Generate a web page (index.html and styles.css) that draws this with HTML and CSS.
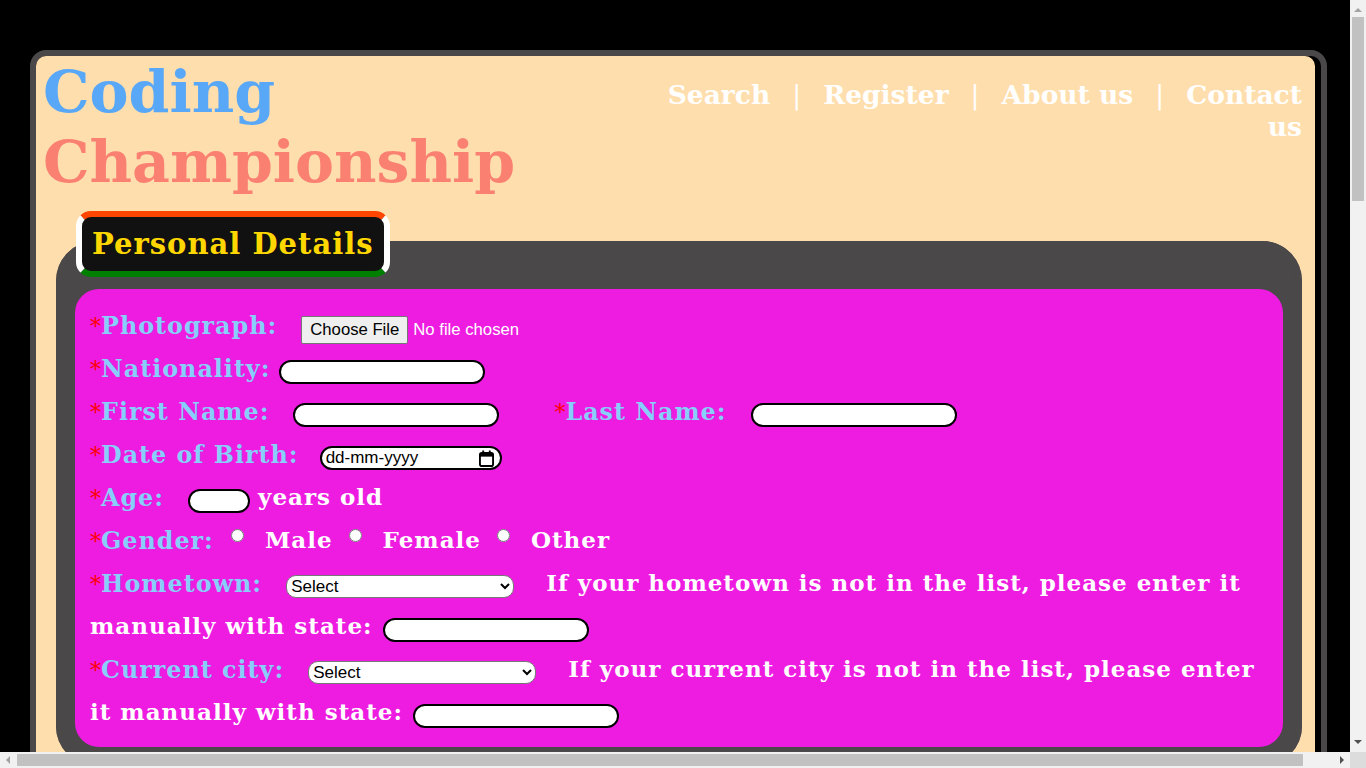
FILE: index.html
```html
<!DOCTYPE html>
<html lang="en">
<head>
<meta charset="utf-8">
<title>Coding Championship – Registration</title>
<link rel="stylesheet" href="styles.css">
</head>
<body>
<div class="frame">
  <div class="page">
    <header class="top">
      <h1 class="brand"><span class="brand-a">Coding</span><span class="brand-b">Championship</span></h1>
      <nav class="nav"><a href="#">Search</a><span class="sep">|</span><a href="#">Register</a><span class="sep">|</span><a href="#">About us</a><span class="sep">|</span><a href="#">Contact us</a></nav>
    </header>

    <form class="reg">
      <fieldset class="group">
        <legend class="legend">Personal Details</legend>
        <div class="panel">
          <div class="row"><label class="lbl"><span class="req">*</span>Photograph:</label><input class="file" type="file"></div>
          <div class="row"><label class="lbl lbl-tight"><span class="req">*</span>Nationality:</label><input class="txt" type="text"></div>
          <div class="row"><label class="lbl"><span class="req">*</span>First Name:</label><input class="txt" type="text"><label class="lbl lbl-next"><span class="req">*</span>Last Name:</label><input class="txt" type="text"></div>
          <div class="row"><label class="lbl lbl-dob"><span class="req">*</span>Date of Birth:</label><span class="date"><input class="date-in" type="text" placeholder="dd-mm-yyyy"><svg class="cal" viewBox="0 0 16 18" width="15" height="17" aria-hidden="true"><rect x="1" y="3" width="14" height="14" rx="2" fill="none" stroke="#000" stroke-width="2"/><rect x="1" y="3" width="14" height="4" fill="#000"/><rect x="3.5" y="0.5" width="2" height="4" fill="#000"/><rect x="10.5" y="0.5" width="2" height="4" fill="#000"/></svg></span></div>
          <div class="row"><label class="lbl"><span class="req">*</span>Age:</label><input class="txt txt-age" type="text"><span class="after">years old</span></div>
          <div class="row"><label class="lbl lbl-gender"><span class="req">*</span>Gender:</label><input class="radio" type="radio" name="g"><span class="opt">Male</span><input class="radio" type="radio" name="g"><span class="opt">Female</span><input class="radio" type="radio" name="g"><span class="opt">Other</span></div>
          <div class="row"><label class="lbl"><span class="req">*</span>Hometown:</label><select class="sel"><option>Select</option></select><span class="note">If your hometown is not in the list, please enter it manually with state:</span><input class="txt txt-after" type="text"></div>
          <div class="row"><label class="lbl"><span class="req">*</span>Current city:</label><select class="sel"><option>Select</option></select><span class="note">If your current city is not in the list, please enter it manually with state:</span><input class="txt txt-after" type="text"></div>
        </div>
      </fieldset>

      <fieldset class="group">
        <legend class="legend">Contact Details</legend>
        <div class="panel">
          <div class="row"><label class="lbl"><span class="req">*</span>Email ID:</label><input class="txt" type="text"></div>
          <div class="row"><label class="lbl"><span class="req">*</span>Confirm Email ID:</label><input class="txt" type="text"></div>
          <div class="row"><label class="lbl"><span class="req">*</span>Mobile No.:</label><span class="after">+91</span><input class="txt txt-after" type="text"></div>
          <div class="row"><label class="lbl">Alternate Mobile No.:</label><span class="after">+91</span><input class="txt txt-after" type="text"></div>
          <div class="row"><label class="lbl"><span class="req">*</span>Address:</label><textarea class="area" rows="3"></textarea></div>
          <div class="row"><label class="lbl"><span class="req">*</span>State:</label><select class="sel"><option>Select</option></select></div>
          <div class="row"><label class="lbl"><span class="req">*</span>Pin Code:</label><input class="txt" type="text"></div>
        </div>
      </fieldset>

      <fieldset class="group">
        <legend class="legend">Educational Details</legend>
        <div class="panel">
          <div class="row"><label class="lbl"><span class="req">*</span>Institution Name:</label><input class="txt" type="text"></div>
          <div class="row"><label class="lbl"><span class="req">*</span>Course:</label><select class="sel"><option>Select</option></select><label class="lbl lbl-next"><span class="req">*</span>Year:</label><select class="sel"><option>Select</option></select></div>
          <div class="row"><label class="lbl"><span class="req">*</span>Roll Number:</label><input class="txt" type="text"></div>
          <div class="row"><label class="lbl"><span class="req">*</span>College ID Card:</label><input class="file" type="file"></div>
          <div class="row"><label class="lbl">CGPA / Percentage:</label><input class="txt txt-age" type="text"></div>
        </div>
      </fieldset>

      <fieldset class="group">
        <legend class="legend">Coding Profile</legend>
        <div class="panel">
          <div class="row"><label class="lbl lbl-gender"><span class="req">*</span>Preferred Language:</label><input class="radio" type="checkbox"><span class="opt">C</span><input class="radio" type="checkbox"><span class="opt">C++</span><input class="radio" type="checkbox"><span class="opt">Java</span><input class="radio" type="checkbox"><span class="opt">Python</span></div>
          <div class="row"><label class="lbl lbl-gender"><span class="req">*</span>Experience:</label><input class="radio" type="radio" name="e"><span class="opt">Beginner</span><input class="radio" type="radio" name="e"><span class="opt">Intermediate</span><input class="radio" type="radio" name="e"><span class="opt">Expert</span></div>
          <div class="row"><label class="lbl">Codechef Handle:</label><input class="txt" type="text"></div>
          <div class="row"><label class="lbl">Codeforces Handle:</label><input class="txt" type="text"></div>
          <div class="row"><label class="lbl">GitHub Profile:</label><input class="txt" type="text"></div>
          <div class="row"><label class="lbl">Previous Championships:</label><input class="txt" type="text"></div>
          <div class="row"><label class="lbl"><span class="req">*</span>Why do you want to participate?</label></div>
          <div class="row"><textarea class="area area-wide" rows="4"></textarea></div>
        </div>
      </fieldset>

      <div class="actions">
        <div class="agree"><input class="radio" type="checkbox"><span class="opt">I agree to the rules and regulations of the championship.</span></div>
        <div class="btns"><button class="btn" type="submit">Submit</button><button class="btn" type="reset">Reset</button></div>
      </div>
    </form>

    <footer class="foot">© Coding Championship. All rights reserved.</footer>
  </div>
</div>

<div class="vscroll" aria-hidden="true">
  <span class="arrow arrow-up"></span>
  <span class="vthumb"></span>
  <span class="arrow arrow-down"></span>
</div>
<div class="hscroll" aria-hidden="true">
  <span class="arrow arrow-left"></span>
  <span class="hthumb"></span>
  <span class="arrow arrow-right"></span>
</div>
<div class="scorner" aria-hidden="true"></div>
</body>
</html>
```

FILE: styles.css
```css
* { box-sizing: border-box; }

html, body { background: #000; }

body {
  margin: 0;
  font-family: "DejaVu Serif", Georgia, serif;
}

.frame {
  width: 1297px;
  margin: 50px 54px 60px 30px;
  border: 6px solid #4a4848;
  border-radius: 16px;
  background: #000;
}

.page {
  margin-right: 6px;
  background: #ffdead;
  border-radius: 10px;
  padding-bottom: 30px;
}

/* header */
.top {
  display: flex;
  justify-content: space-between;
  align-items: flex-start;
  padding: 1px 13px 0 7px;
}

.brand {
  margin: 0;
  font-size: 58.5px;
  line-height: 70px;
  font-weight: bold;
}

.brand span { display: block; }
.brand-a { color: #59a8f7; }
.brand-b { color: #fa8072; }

.nav {
  width: 650px;
  margin-top: 22px;
  text-align: right;
  font-size: 26.5px;
  line-height: 32px;
  font-weight: bold;
  color: #fff;
}

.nav a { color: #fff; text-decoration: none; }
.sep { margin: 0 22px; font-weight: normal; }

/* fieldsets */
.group {
  margin: 14px 13px 0 20px;
  border: 6px solid #4a4848;
  border-radius: 40px;
  background: #4a4848;
  padding: 12px 13px 13px;
  min-width: 0;
}

.legend {
  margin-left: 1px;
  padding: 10px;
  border: 6px solid;
  border-color: #ff4500 #fff #008000 #fff;
  border-radius: 15px;
  background: #111;
  color: #ffd700;
  font-size: 29px;
  line-height: 34px;
  font-weight: bold;
  letter-spacing: 1px;
}

.panel {
  background: #ed1ce0;
  border-radius: 24px;
  padding: 14px 15px;
  color: #fff;
  font-size: 23px;
  line-height: 43px;
  font-weight: bold;
  letter-spacing: 1px;
}

.lbl {
  color: #87cefa;
  font-size: 23.8px;
  line-height: 1;
  vertical-align: -1px;
  margin-right: 24px;
}
.lbl-tight { margin-right: 9px; }
.lbl-gender { margin-right: 12px; }
.lbl-dob { margin-right: 21px; }
.lbl-next { margin-left: 55px; }

.req {
  color: #f00;
  font-size: 22px;
  line-height: 1;
  font-weight: normal;
  letter-spacing: 0;
}

.txt {
  width: 206px;
  height: 24px;
  margin-top: 4px;
  padding: 0 8px;
  border: 2px solid #000;
  border-radius: 12px;
  background: #fff;
  font: 16px "Liberation Sans", Arial, sans-serif;
  vertical-align: middle;
}

.txt-age { width: 62px; }
.txt-after { margin-left: 10px; }

.after { margin-left: 8px; line-height: 1; }

.file {
  margin-top: 5px;
  font: 16.7px "Liberation Sans", Arial, sans-serif;
  color: #fff;
  letter-spacing: 0;
  vertical-align: middle;
}

.file::file-selector-button {
  font: 16.7px "Liberation Sans", Arial, sans-serif;
  color: #000;
  background: #efefef;
  border: 1px solid #767676;
  border-radius: 2px;
  padding: 3px 8px;
  margin-right: 5px;
}

.date {
  display: inline-flex;
  align-items: center;
  justify-content: space-between;
  width: 182px;
  height: 24px;
  margin-top: 4px;
  padding: 0 6px 0 4px;
  border: 2px solid #000;
  border-radius: 12px;
  background: #fff;
  vertical-align: middle;
}

.date-in {
  width: 130px;
  padding: 0;
  border: none;
  background: transparent;
  font: 17px "Liberation Sans", Arial, sans-serif;
  letter-spacing: 0;
}

.date-in::placeholder { color: #000; opacity: 1; }
.cal { display: block; }

.radio {
  margin: 0 3px 0 5px;
  vertical-align: 6px;
}

.opt { margin: 0 11px 0 18px; line-height: 1; }

.sel {
  width: 228px;
  height: 23px;
  margin-top: 3px;
  border: 1px solid #767676;
  border-radius: 10px;
  background: #fff;
  font: 17px "Liberation Sans", Arial, sans-serif;
  letter-spacing: 0;
  vertical-align: middle;
}

.note { margin-left: 32px; line-height: 1; }

.area {
  width: 420px;
  height: 86px;
  border: 2px solid #000;
  border-radius: 12px;
  background: #fff;
  vertical-align: top;
  margin-top: 8px;
}

.area-wide { width: 700px; height: 120px; margin-top: 0; }

.actions {
  margin: 30px 13px 0 20px;
  color: #fff;
  font-size: 23px;
  line-height: 43px;
  font-weight: bold;
}

.agree { color: #4a4848; }

.btns {
  display: flex;
  justify-content: center;
  gap: 40px;
  margin-top: 20px;
}

.btn {
  width: 180px;
  height: 52px;
  border: 6px solid #4a4848;
  border-radius: 26px;
  background: #ed1ce0;
  color: #fff;
  font: bold 24px "DejaVu Serif", Georgia, serif;
}

.foot {
  margin: 40px 13px 0 20px;
  text-align: center;
  color: #4a4848;
  font-size: 18px;
  font-weight: bold;
}

/* browser scrollbars, as they show in the screenshot */
.vscroll {
  position: fixed;
  top: 0;
  right: 0;
  width: 16px;
  height: 752px;
  background: #f1f1f1;
}

.hscroll {
  position: fixed;
  left: 0;
  bottom: 0;
  width: 1350px;
  height: 16px;
  background: #f1f1f1;
}

.scorner {
  position: fixed;
  right: 0;
  bottom: 0;
  width: 16px;
  height: 16px;
  background: #dcdcdc;
}

.vthumb {
  position: absolute;
  top: 17px;
  left: 2px;
  width: 12px;
  height: 184px;
  background: #c1c1c1;
}

.hthumb {
  position: absolute;
  left: 17px;
  top: 2px;
  width: 1286px;
  height: 12px;
  background: #c1c1c1;
}

.arrow {
  position: absolute;
  width: 0;
  height: 0;
  border: 4px solid transparent;
}

.arrow-up { top: 4px; left: 4px; border-bottom-color: #a3a3a3; }
.arrow-down { bottom: 4px; left: 4px; border-top-color: #505050; }
.arrow-left { left: 2px; top: 4px; border-right-color: #a3a3a3; }
.arrow-right { right: 2px; top: 4px; border-left-color: #505050; }
```
